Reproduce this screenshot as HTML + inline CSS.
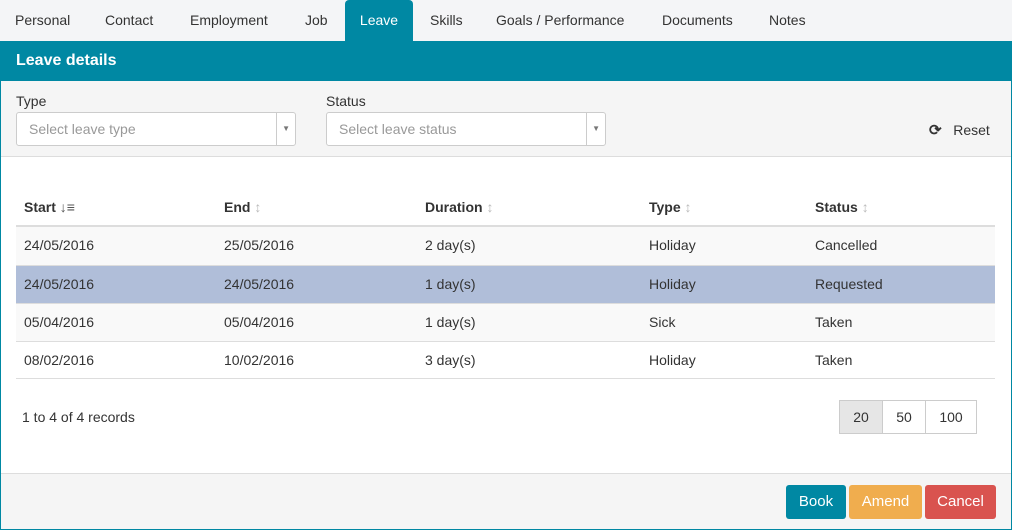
<!DOCTYPE html><html><head><style>
*{box-sizing:border-box;margin:0;padding:0}
body{width:1012px;height:530px;background:#f4f5f7;font-family:"Liberation Sans",sans-serif;font-size:14px;color:#333;position:relative;overflow:hidden}
.tab{position:absolute;top:0;height:41px;line-height:41px;font-size:14px;color:#333}
.tab.a{background:#0088a3;color:#fff;border-radius:4px 4px 0 0;text-align:center}
.panel{position:absolute;left:0;top:41px;width:1012px;height:489px;border:1px solid #0088a3;background:#fff}
.hd{height:40px;background:#0088a3;color:#fff;font-size:16px;line-height:38px;padding-left:15px;font-weight:bold}
.flt{position:absolute;top:39px;left:0;right:0;height:76px;background:#f5f5f5;border-bottom:1px solid #ddd}
.lbl{position:absolute;top:12px;font-size:14px}
.sel{position:absolute;top:31px;height:34px;width:280px;background:#fff;border:1px solid #ccc;border-radius:3px;color:#999;line-height:32px;padding-left:12px}
.sel:after{content:"";position:absolute;right:18px;top:0;height:32px;border-left:1px solid #ccc}
.sel i{position:absolute;right:5px;top:0;font-style:normal;font-size:8px;color:#777}
.t{position:absolute;left:15px;width:979px}
.row{position:absolute;left:0;width:979px;height:38px;border-top:1px solid #ddd;line-height:37px}
.row span,.th span{position:absolute}
.th{position:absolute;top:155px;left:15px;width:979px;height:30px;font-weight:bold;border-bottom:2px solid #ddd;line-height:20px}
.ic{color:#bbb;font-weight:normal}
.pg{position:absolute;top:358px;left:838px;display:flex}
.pg div{height:34px;border:1px solid #ccc;line-height:32px;text-align:center;margin-left:-1px;background:#fff}
.ft{position:absolute;top:431px;left:0;right:0;bottom:0;background:#f5f5f5;border-top:1px solid #ddd}
.b{position:absolute;top:11px;height:34px;color:#fff;line-height:34px;text-align:center;border-radius:3px;font-size:15px}
</style></head><body>
<div class="tab" style="left:15px">Personal</div>
<div class="tab" style="left:105px">Contact</div>
<div class="tab" style="left:190px">Employment</div>
<div class="tab" style="left:305px">Job</div>
<div class="tab a" style="left:345px;width:68px">Leave</div>
<div class="tab" style="left:430px">Skills</div>
<div class="tab" style="left:496px">Goals / Performance</div>
<div class="tab" style="left:662px">Documents</div>
<div class="tab" style="left:769px">Notes</div>
<div class="panel">
<div class="hd">Leave details</div>
<div class="flt">
<div class="lbl" style="left:15px">Type</div>
<div class="sel" style="left:15px">Select leave type<i>▼</i></div>
<div class="lbl" style="left:325px">Status</div>
<div class="sel" style="left:325px">Select leave status<i>▼</i></div>
<div style="position:absolute;left:928px;top:40px;font-size:14px"><b style="font-size:15px">⟳</b>&nbsp;&nbsp; Reset</div>
</div>
<div class="th"><span style="left:8px">Start <span class="ic" style="position:static;color:#555">↓≡</span></span><span style="left:208px">End <span class="ic" style="position:static">↕</span></span><span style="left:409px">Duration <span class="ic" style="position:static">↕</span></span><span style="left:633px">Type <span class="ic" style="position:static">↕</span></span><span style="left:799px">Status <span class="ic" style="position:static">↕</span></span></div>
<div class="t" style="top:185px">
<div class="row" style="top:0;background:#f9f9f9;border-top:none"><span style="left:8px">24/05/2016</span><span style="left:208px">25/05/2016</span><span style="left:409px">2 day(s)</span><span style="left:633px">Holiday</span><span style="left:799px">Cancelled</span></div>
<div class="row" style="top:38px;background:#b0bed9"><span style="left:8px">24/05/2016</span><span style="left:208px">24/05/2016</span><span style="left:409px">1 day(s)</span><span style="left:633px">Holiday</span><span style="left:799px">Requested</span></div>
<div class="row" style="top:76px;background:#f9f9f9"><span style="left:8px">05/04/2016</span><span style="left:208px">05/04/2016</span><span style="left:409px">1 day(s)</span><span style="left:633px">Sick</span><span style="left:799px">Taken</span></div>
<div class="row" style="top:114px;border-bottom:1px solid #ddd"><span style="left:8px">08/02/2016</span><span style="left:208px">10/02/2016</span><span style="left:409px">3 day(s)</span><span style="left:633px">Holiday</span><span style="left:799px">Taken</span></div>
</div>
<div style="position:absolute;left:21px;top:367px">1 to 4 of 4 records</div>
<div class="pg"><div style="width:44px;background:#e6e6e6;margin-left:0">20</div><div style="width:44px">50</div><div style="width:52px">100</div></div>
<div class="ft">
<div class="b" style="left:785px;width:60px;background:#0088a3">Book</div>
<div class="b" style="left:848px;width:73px;background:#f0ad4e">Amend</div>
<div class="b" style="left:924px;width:71px;background:#d9534f">Cancel</div>
</div>
</div>
</body></html>
